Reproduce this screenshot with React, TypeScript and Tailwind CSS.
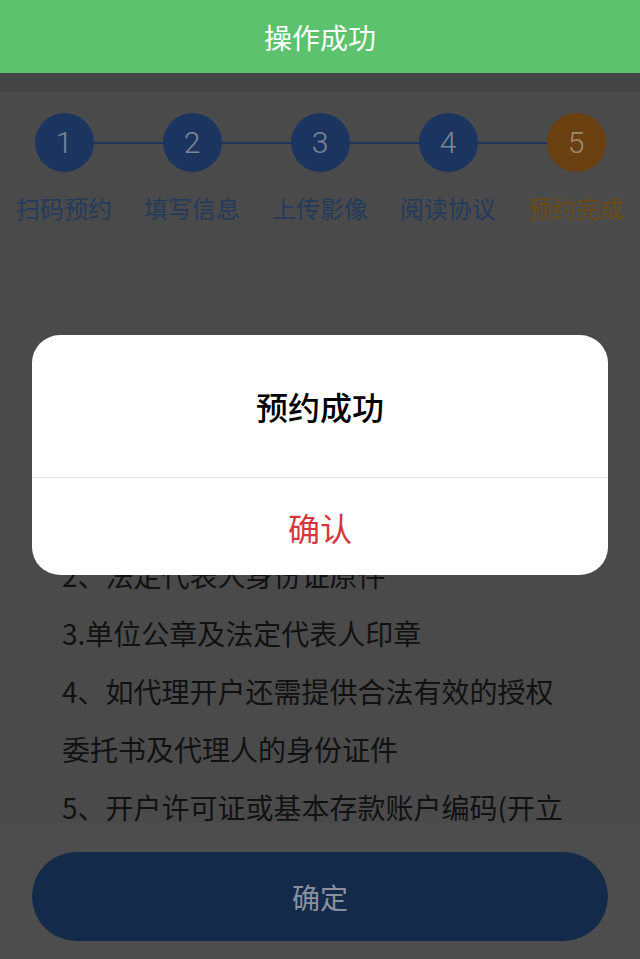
import React from "react";

const steps = ["扫码预约", "填写信息", "上传影像", "阅读协议", "预约完成"];

const lines = [
  "温馨提示：开户需携带以下资料",
  "1、营业执照正本",
  "2、法定代表人身份证原件",
  "3.单位公章及法定代表人印章",
  "4、如代理开户还需提供合法有效的授权",
  "委托书及代理人的身份证件",
  "5、开户许可证或基本存款账户编码(开立",
];

const StepItem: React.FC<{ index: number; label: string }> = ({ index, label }) => {
  const last = index === steps.length - 1;
  return (
    <div className="flex flex-col items-center">
      <div className="flex w-full items-center">
        <div className={index === 0 ? "h-[2px] flex-1" : "h-[2px] flex-1 bg-[#1e3459]"} />
        <div
          className={
            last
              ? "flex h-[59px] w-[59px] items-center justify-center rounded-full bg-[#6b4010] text-[30px] font-light text-[#9d8a6e]"
              : "flex h-[59px] w-[59px] items-center justify-center rounded-full bg-[#1b3560] text-[30px] font-light text-[#7e8696]"
          }
          style={{ fontFamily: "Roboto, 'Liberation Sans', sans-serif" }}
        >
          {index + 1}
        </div>
        <div className={last ? "h-[2px] flex-1" : "h-[2px] flex-1 bg-[#1e3459]"} />
      </div>
      <div className={last ? "mt-[20px] text-[24px] leading-[32px] text-[#6c4a15]" : "mt-[20px] text-[24px] leading-[32px] text-[#243a5d]"}>
        {label}
      </div>
    </div>
  );
};

export default function App() {
  return (
    <div
      className="relative h-[959px] w-[640px] overflow-hidden bg-[#444444]"
      style={{ fontFamily: "'Noto Sans CJK SC', 'Noto Sans', sans-serif" }}
    >
      <header className="flex h-[73px] items-center justify-center bg-[#5cc26e] text-[28px] text-white">
        操作成功
      </header>

      <div className="mt-[19px] flex h-[867px] flex-col bg-[#4a4a4a]">
        <div className="grid grid-cols-5 pt-[21px]">
          {steps.map((s, i) => (
            <StepItem key={s} index={i} label={s} />
          ))}
        </div>

        <div className="h-[599px] overflow-hidden px-[62px] pt-[206px] text-[28px] leading-[58px] text-[#111111]">
          {lines.map((l) => (
            <p key={l}>{l}</p>
          ))}
        </div>

        <div className="flex-1 bg-[#4d4d4d] px-[32px] pt-[29px]">
          <button className="flex h-[89px] w-full items-center justify-center rounded-full bg-[#142a4b] text-[28px] text-[#8a909c]">
            确定
          </button>
        </div>
      </div>

      <div className="absolute inset-x-0 bottom-0 top-[73px] px-[32px] pt-[262px]">
        <div className="overflow-hidden rounded-[28px] bg-white">
          <div className="flex h-[142px] items-center justify-center text-[32px] font-medium text-black">
            预约成功
          </div>
          <div className="h-px bg-[#e6e6e6]" />
          <div className="flex h-[97px] items-center justify-center text-[32px] text-[#d4383e]">
            确认
          </div>
        </div>
      </div>
    </div>
  );
}
